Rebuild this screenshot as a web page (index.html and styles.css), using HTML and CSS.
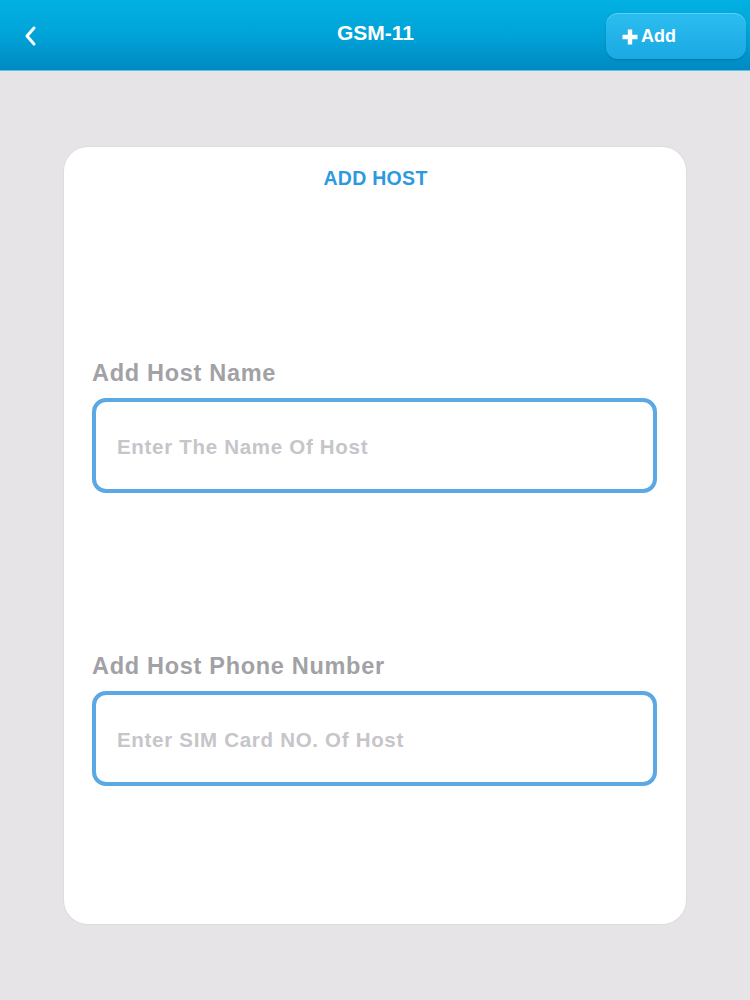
FILE: index.html
```html
<!DOCTYPE html>
<html>
<head>
<meta charset="utf-8">
<link rel="stylesheet" href="styles.css">
</head>
<body>
<header class="topbar">
  <div class="back">
    <svg width="14" height="22" viewBox="0 0 14 22"><path d="M11 3 L4 11 L11 19" fill="none" stroke="#fff" stroke-width="3" stroke-linecap="round" stroke-linejoin="round"/></svg>
  </div>
  <div class="title">GSM-11</div>
  <button class="add-btn">
    <svg width="16" height="16" viewBox="0 0 16 16"><path d="M8 0.5 V15.5 M0.5 8 H15.5" stroke="#fff" stroke-width="4.4" stroke-linecap="butt"/></svg>
    <span>Add</span>
  </button>
</header>
<main class="page">
  <section class="card">
    <h1 class="card-title">ADD HOST</h1>
    <div class="field first">
      <label class="label">Add Host Name</label>
      <div class="input"><span class="ph">Enter The Name Of Host</span></div>
    </div>
    <div class="field second">
      <label class="label">Add Host Phone Number</label>
      <div class="input"><span class="ph">Enter SIM Card NO. Of Host</span></div>
    </div>
  </section>
</main>
</body>
</html>
```
FILE: styles.css
```css
* { box-sizing: border-box; }
html, body { margin: 0; padding: 0; }
body {
  width: 750px;
  height: 1000px;
  background: #e6e4e7;
  font-family: "Liberation Sans", Arial, sans-serif;
  overflow: hidden;
}
.topbar {
  height: 71px;
  background: linear-gradient(#02b1e2 0%, #00a3d8 50%, #0089c2 100%);
  display: flex;
  align-items: center;
  position: relative;
  border-bottom: 1px solid #5cc3e6;
}
.back {
  width: 60px;
  display: flex;
  justify-content: center;
  padding-top: 2px;
}
.title {
  position: absolute;
  left: 0; right: 0;
  top: 20px;
  text-align: center;
  color: #fff;
  font-weight: bold;
  font-size: 21px;
  line-height: 26px;
  padding-left: 1px;
}
.add-btn {
  margin-left: auto;
  margin-right: 4px;
  margin-top: 2px;
  width: 140px;
  height: 46px;
  border-radius: 12px;
  border: none;
  background: linear-gradient(#2cbdf0, #1aa9e3);
  box-shadow: inset 0 1px 0 rgba(255,255,255,0.25), 0 1px 2px rgba(0,60,100,0.3);
  color: #fff;
  font-family: "Liberation Sans", Arial, sans-serif;
  font-weight: bold;
  font-size: 18px;
  display: flex;
  align-items: center;
  padding: 0 0 0 16px;
  gap: 3px;
}
.add-btn svg { margin-top: 1px; }
.page {
  padding: 76px 64px 0 64px;
}
.card {
  background: #fff;
  height: 777px;
  border-radius: 24px;
  box-shadow: 0 0 0 1px #dedcdf;
  padding: 20px 29px 0 28px;
}
.card-title {
  margin: 0;
  text-align: center;
  color: #2d9ae0;
  font-size: 19.5px;
  line-height: 22px;
  font-weight: bold;
  letter-spacing: 0.3px;
  padding-left: 2px;
}
.field.first { margin-top: 170px; }
.field.second { margin-top: 159px; }
.label {
  display: block;
  color: #a2a1a6;
  font-weight: bold;
  font-size: 23.5px;
  line-height: 28px;
  letter-spacing: 0.7px;
}
.input {
  margin-top: 11px;
  height: 95px;
  border: 4px solid #5aa8e4;
  border-radius: 14px;
  display: flex;
  align-items: center;
  padding-left: 21px;
  padding-top: 2px;
}
.ph {
  color: #c6c5ca;
  font-size: 20.5px;
  letter-spacing: 0.7px;
  font-weight: bold;
}
```
